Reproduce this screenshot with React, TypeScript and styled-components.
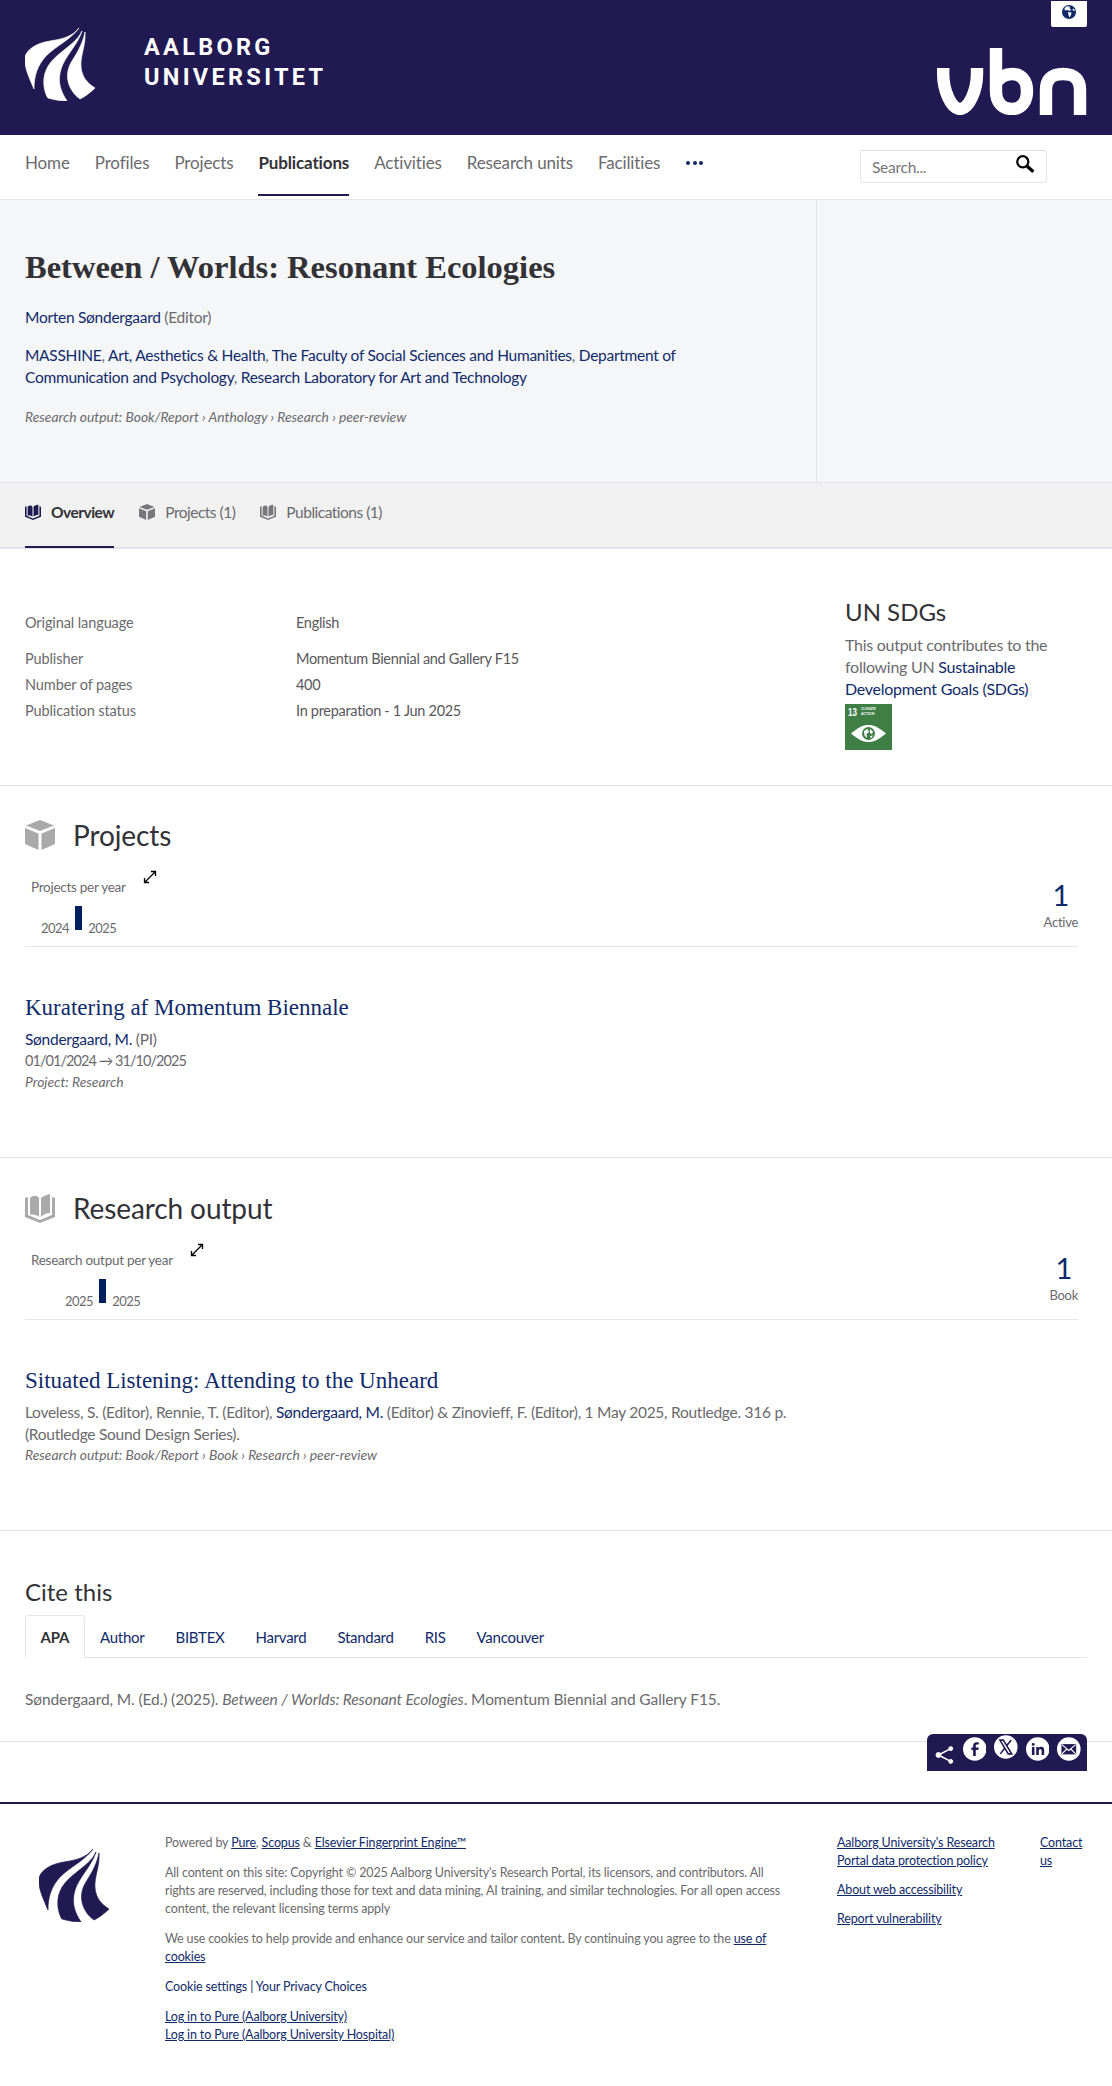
import styled, { createGlobalStyle } from "styled-components";

const NAVY = "#211a52";
const LINK = "#0f2a6b";
const TEXT = "#6a6a6d";
const DARK = "#323236";
const RULE = "#e3e5e8";
const SERIF = `"Liberation Serif", serif`;

const GlobalStyle = createGlobalStyle`
  html, body {
    margin: 0;
    padding: 0;
    background: #fff;
    color: ${TEXT};
    font-family: Lato, "Open Sans", sans-serif;
    font-size: 15px;
    letter-spacing: -0.27px;
  }
  * { box-sizing: border-box; }
  a { color: ${LINK}; text-decoration: none; }
`;

const Banner = styled.header`
  height: 135px;
  background: ${NAVY};
  display: flex;
  justify-content: space-between;
  padding: 0 25px;
`;

const Brand = styled.div`
  display: flex;
  align-items: flex-start;
  padding-top: 28px;
  gap: 49px;
`;

const BrandName = styled.div`
  margin-top: 3.5px;
  font-family: Roboto, sans-serif;
  font-weight: 700;
  font-size: 23.5px;
  line-height: 30px;
  letter-spacing: 3.3px;
  color: #fff;
`;

const BannerRight = styled.div`
  display: flex;
  flex-direction: column;
  align-items: flex-end;
`;

const GlobeButton = styled.div`
  width: 36px;
  height: 26px;
  margin-top: 1px;
  background: #fff;
  border-radius: 0 0 2px 2px;
  display: flex;
  align-items: center;
  justify-content: center;
  padding-bottom: 4px;
`;

const VbnLogo = styled.svg`
  width: 150px;
  height: 67px;
  margin-top: 21px;
`;

const NavBar = styled.nav`
  height: 65px;
  border-bottom: 1px solid ${RULE};
  display: flex;
  padding: 0 65px 0 25px;
  gap: 25px;
`;

const NavItem = styled.a<{ $active?: boolean }>`
  height: 61px;
  line-height: 56px;
  font-size: 17px;
  letter-spacing: -0.14px;
  color: ${(p) => (p.$active ? DARK : TEXT)};
  font-weight: ${(p) => (p.$active ? 700 : 400)};
  border-bottom: 2px solid ${(p) => (p.$active ? NAVY : "transparent")};
`;

const MoreDots = styled.span`
  display: flex;
  gap: 2.5px;
  align-items: center;
  height: 56px;
  margin-left: 1px;
  i {
    width: 4px;
    height: 4px;
    border-radius: 50%;
    background: ${LINK};
  }
`;

const SearchBox = styled.div`
  margin-left: auto;
  margin-top: 15px;
  width: 187px;
  height: 33px;
  border: 1px solid #e4e6e9;
  border-top-color: #dcdcdc;
  border-radius: 3px;
  display: flex;
  align-items: center;
  justify-content: space-between;
  padding: 0 11px 0 11px;
  font-size: 15.5px;
  color: #77777a;
  svg { margin-top: -6px; }
`;

const Hero = styled.section`
  height: 282px;
  background: #f5f6f8;
  display: flex;
`;

const HeroMain = styled.div`
  width: 817px;
  border-right: 1px solid ${RULE};
  padding: 47px 120px 0 25px;
`;

const Title = styled.h1`
  margin: 0 0 19px;
  font-family: ${SERIF};
  font-weight: 700;
  font-size: 32.5px;
  line-height: 40px;
  letter-spacing: 0;
  color: ${DARK};
`;

const Persons = styled.p`
  margin: 0 0 16px;
  font-size: 15.5px;
  line-height: 22px;
`;

const Meta = styled.p`
  margin: 0;
  font-size: 13.85px;
  line-height: 20px;
  letter-spacing: 0;
  font-style: italic;
`;

const HeroMeta = styled(Meta)`
  margin-top: 19px;
`;

const Tabs = styled.div`
  height: 67px;
  background: #f1f1f1;
  border-top: 1px solid ${RULE};
  border-bottom: 2px solid #e0e3e7;
  display: flex;
  gap: 25px;
  padding-left: 25px;
`;

const Tab = styled.a<{ $active?: boolean }>`
  display: flex;
  align-items: flex-start;
  gap: 10px;
  height: 65px;
  padding-top: 18px;
  line-height: 22px;
  font-size: 15.5px;
  letter-spacing: -0.5px;
  color: ${(p) => (p.$active ? DARK : TEXT)};
  font-weight: ${(p) => (p.$active ? 700 : 400)};
  border-bottom: 2px solid ${(p) => (p.$active ? NAVY : "transparent")};
  svg { margin-top: 3px; }
`;

const Overview = styled.section`
  height: 237px;
  border-bottom: 1px solid ${RULE};
  display: flex;
  padding: 48px 25px 0;
`;

const Details = styled.dl`
  width: 820px;
  margin: 13px 0 0;
  font-size: 14.5px;
  letter-spacing: -0.1px;
`;

const DetailRow = styled.div<{ $spaced?: boolean }>`
  display: flex;
  line-height: 26px;
  margin-bottom: ${(p) => (p.$spaced ? "10px" : "0")};
  dt { width: 271px; }
  dd { margin: 0; color: #58585b; letter-spacing: -0.3px; }
`;

const Aside = styled.aside`
  width: 210px;
`;

const AsideTitle = styled.h3`
  margin: 0 0 7px;
  font-weight: 400;
  font-size: 24px;
  line-height: 30px;
  letter-spacing: 0;
  color: ${DARK};
`;

const AsideText = styled.p`
  margin: 0;
  font-size: 16px;
  line-height: 22px;
`;

const SdgBadge = styled.div`
  width: 47px;
  height: 46px;
  margin-top: 4px;
  background: #3f7e44;
  color: #fff;
  padding: 3px 3px;
  letter-spacing: 0;
  display: flex;
  flex-direction: column;
  align-items: center;
`;

const SdgHead = styled.div`
  align-self: flex-start;
  display: flex;
  gap: 3px;
  b {
    font-family: "Liberation Sans", sans-serif;
    font-size: 10px;
    line-height: 11px;
    transform: scaleX(0.8);
    transform-origin: left;
    width: 9px;
  }
  span {
    font-size: 3.5px;
    line-height: 4.5px;
    font-weight: 700;
    margin-left: 1px;
  }
`;

const SdgEye = styled.svg`
  width: 35px;
  height: 17px;
  margin-top: 7px;
`;

const Section = styled.section<{ $top?: number }>`
  border-bottom: 1px solid ${RULE};
  padding: ${(p) => p.$top ?? 28}px 25px 65px;
`;

const SectionHead = styled.div`
  display: flex;
  align-items: center;
  gap: 18px;
  height: 42px;
  margin-bottom: 14px;
  h2 {
    margin: 0;
    font-weight: 400;
    font-size: 28px;
    letter-spacing: -0.1px;
    color: ${DARK};
  }
`;

const ChartRow = styled.div`
  display: flex;
  justify-content: space-between;
  height: 77px;
  margin-right: 9px;
  border-bottom: 1px solid ${RULE};
  margin-bottom: 46px;
`;

const ChartBox = styled.div`
  padding-left: 6px;
`;

const ChartLabel = styled.div`
  display: flex;
  gap: 17px;
  font-size: 13.5px;
  line-height: 20px;
  margin-top: 7px;
  svg { margin-top: -7px; }
`;

const Plot = styled.div<{ $offset: number }>`
  display: flex;
  align-items: flex-end;
  gap: 6px;
  padding-left: ${(p) => p.$offset}px;
  margin-top: 9px;
  height: 24px;
  font-size: 13px;
  letter-spacing: -0.5px;
  line-height: 16px;
  span { margin-bottom: -6px; }
`;

const Bar = styled.i`
  width: 7px;
  height: 24px;
  background: #001f5f;
`;

const Tally = styled.div`
  text-align: right;
  font-size: 13px;
  line-height: 20px;
  a {
    display: block;
    font-size: 29px;
    line-height: 34px;
    margin-top: 8px;
    text-align: center;
  }
`;

const ItemTitle = styled.h3`
  margin: 0 0 5px;
  font-family: ${SERIF};
  font-weight: 400;
  font-size: 23px;
  line-height: 30px;
  letter-spacing: 0;
  color: ${LINK};
`;

const ItemLine = styled.p`
  margin: 0;
  font-size: 15.5px;
  line-height: 22px;
  max-width: 810px;
`;

const DateLine = styled(ItemLine)`
  font-size: 14.5px;
  letter-spacing: -0.95px;
`;

const Cite = styled.section`
  position: relative;
  border-bottom: 1px solid ${RULE};
  padding: 46px 25px 31px;
  h3 {
    margin: 0 0 8px;
    font-weight: 400;
    font-size: 24px;
    line-height: 30px;
    letter-spacing: 0;
    color: ${DARK};
  }
`;

const CiteTabs = styled.div`
  display: flex;
  height: 43px;
  width: 1062px;
  border-bottom: 1px solid ${RULE};
  margin-bottom: 30px;
`;

const CiteTab = styled.a<{ $active?: boolean }>`
  height: 43px;
  padding: 0 14.5px;
  line-height: 42px;
  font-size: 15px;
  color: ${(p) => (p.$active ? DARK : LINK)};
  font-weight: ${(p) => (p.$active ? 700 : 400)};
  background: ${(p) => (p.$active ? "#fff" : "transparent")};
  border: 1px solid ${(p) => (p.$active ? RULE : "transparent")};
  border-bottom-color: ${(p) => (p.$active ? "#fff" : "transparent")};
  border-radius: 3px 3px 0 0;
`;

const CiteText = styled.p`
  margin: 0;
  font-size: 15.5px;
  line-height: 22px;
  letter-spacing: -0.1px;
`;

const ShareBar = styled.div`
  position: absolute;
  right: 25px;
  bottom: -30px;
  width: 160px;
  height: 37px;
  background: ${NAVY};
  border-radius: 6px 6px 0 0;
  display: flex;
  align-items: flex-start;
  gap: 8px;
  padding: 3px 6px 0 8px;
`;

const ShareIcon = styled.svg`
  margin-top: 8px;
  margin-right: 0;
`;

const ShareCircle = styled.svg<{ $up?: boolean }>`
  margin-top: ${(p) => (p.$up ? "-2px" : "0")};
`;

const Footer = styled.footer`
  margin-top: 60px;
  border-top: 2px solid ${NAVY};
  height: 284px;
  padding-top: 30px;
  display: flex;
  font-size: 12.5px;
  line-height: 18px;
  letter-spacing: -0.15px;
  a.u { text-decoration: underline; }
`;

const FooterLogo = styled.div`
  width: 165px;
  padding: 15px 0 0 39px;
`;

const FooterText = styled.div`
  width: 626px;
  p { margin: 0 0 12px; }
`;

const FooterLinks = styled.div`
  width: 165px;
  margin: 0 38px 0 46px;
  p { margin: 0 0 11px; }
`;

const FooterContact = styled.div`
  width: 50px;
`;

function Wings({ fill }: { fill: string }) {
  return (
    <svg width="70" height="73" viewBox="0 0 70 73" fill={fill} stroke={fill} strokeWidth="0.7">
      <path d="M54 0C47 9 37 11 25 13C12 15 2 21 0 29C-1 38 3 47 9 61C9 48 12 38 21 28C32 17 44 13 54 0Z" />
      <path d="M57 3C53 12 45 17 33 27C21 37 18 47 19 58C20 65 22 69 23 70C30 72 36 73 42 73C36 64 32 54 36 41C40 28 52 18 57 3Z" />
      <path d="M60 4C58 14 54 22 47 33C42 41 41 50 45 59C48 65 51 68 55 71C59 69 65 65 70 60C62 55 57 49 56 39C55 28 61 17 60 4Z" />
    </svg>
  );
}

function Globe() {
  return (
    <svg width="14" height="14" viewBox="0 0 14 14">
      <circle cx="7" cy="7" r="7" fill="#0f2a6b" />
      <path d="M4 1.5L8 1.5L7.5 3.5L9 4L8 6L5.5 5L3 5.5L2.5 3.5Z" fill="#fff" />
      <path d="M6 7L9.5 7.5L9 10L7.5 12.5L6.5 10Z" fill="#fff" />
      <path d="M11 3.5L13 5L12 6L10.5 5Z" fill="#fff" />
    </svg>
  );
}

function Cube({ size, fill }: { size: number; fill: string }) {
  return (
    <svg width={size} height={size} viewBox="0 0 30 30" fill={fill}>
      <path d="M15 0L29 5.5L15 11L1 5.5Z" />
      <path d="M0 8L13.5 13.5V30L0 24Z" />
      <path d="M30 8L16.5 13.5V30L30 24Z" />
    </svg>
  );
}

function Book({ size, fill }: { size: number; fill: string }) {
  return (
    <svg width={size} height={size} viewBox="0 0 30 30" fill={fill}>
      <path d="M0 5V24L15 30L30 24V5L27 4V22L15 27L3 22V4Z" />
      <path d="M5 5C8 2 12 2 14 5V24C12 22 8 21 5 22Z" />
      <path d="M25 1C21 2 18 3 16 5V24C18 22 21 20 25 20Z" />
    </svg>
  );
}

function Expand() {
  return (
    <svg width="14" height="14" viewBox="0 0 14 14" fill="none" stroke="#000" strokeWidth="1.3">
      <path d="M2 12L12 2M8 1.5H12.5V6M1.5 8V12.5H6" />
    </svg>
  );
}

function Chart({ label, from, to, offset }: { label: string; from: string; to: string; offset: number }) {
  return (
    <ChartBox>
      <ChartLabel>
        {label} <Expand />
      </ChartLabel>
      <Plot $offset={offset}>
        <span>{from}</span>
        <Bar />
        <span>{to}</span>
      </Plot>
    </ChartBox>
  );
}

export default function App() {
  return (
    <>
      <GlobalStyle />
      <Banner>
        <Brand>
          <Wings fill="#fff" />
          <BrandName>
            AALBORG
            <br />
            UNIVERSITET
          </BrandName>
        </Brand>
        <BannerRight>
          <GlobeButton>
            <Globe />
          </GlobeButton>
          <VbnLogo viewBox="0 0 150 67" fill="none" stroke="#fff" strokeWidth="12.4">
            <path d="M6.2 20V26C6.2 42 14 61 23 61C32 61 40 42 40 26V20" />
            <path d="M59 0V43C59 54 65 61 75 61C85 61 90 53 90 43C90 33 85 26 75 26C69 26 63 29 59 35" />
            <path d="M109 67V42C109 32 114 26 126 26C138 26 143 32 143 42V67" />
          </VbnLogo>
        </BannerRight>
      </Banner>

      <NavBar>
        <NavItem>Home</NavItem>
        <NavItem>Profiles</NavItem>
        <NavItem>Projects</NavItem>
        <NavItem $active>Publications</NavItem>
        <NavItem>Activities</NavItem>
        <NavItem>Research units</NavItem>
        <NavItem>Facilities</NavItem>
        <MoreDots>
          <i />
          <i />
          <i />
        </MoreDots>
        <SearchBox>
          Search...
          <svg width="20" height="20" viewBox="0 0 18 18" fill="none" stroke="#000">
            <circle cx="7" cy="7" r="5" strokeWidth="2" />
            <path d="M11 11L16.5 16" strokeWidth="3" />
          </svg>
        </SearchBox>
      </NavBar>

      <Hero>
        <HeroMain>
          <Title>Between / Worlds: Resonant Ecologies</Title>
          <Persons>
            <a>Morten Søndergaard</a> (Editor)
          </Persons>
          <Persons>
            <a>MASSHINE</a>, <a>Art, Aesthetics &amp; Health</a>, <a>The Faculty of Social Sciences and Humanities</a>,{" "}
            <a>Department of Communication and Psychology</a>, <a>Research Laboratory for Art and Technology</a>
          </Persons>
          <HeroMeta>Research output: Book/Report › Anthology › Research › peer-review</HeroMeta>
        </HeroMain>
      </Hero>

      <Tabs>
        <Tab $active>
          <Book size={16} fill={NAVY} />
          Overview
        </Tab>
        <Tab>
          <Cube size={16} fill="#77777a" />
          Projects (1)
        </Tab>
        <Tab>
          <Book size={16} fill="#77777a" />
          Publications (1)
        </Tab>
      </Tabs>

      <Overview>
        <Details>
          <DetailRow $spaced>
            <dt>Original language</dt>
            <dd>English</dd>
          </DetailRow>
          <DetailRow>
            <dt>Publisher</dt>
            <dd>Momentum Biennial and Gallery F15</dd>
          </DetailRow>
          <DetailRow>
            <dt>Number of pages</dt>
            <dd>400</dd>
          </DetailRow>
          <DetailRow>
            <dt>Publication status</dt>
            <dd>In preparation - 1 Jun 2025</dd>
          </DetailRow>
        </Details>
        <Aside>
          <AsideTitle>UN SDGs</AsideTitle>
          <AsideText>
            This output contributes to the following UN <a>Sustainable Development Goals (SDGs)</a>
          </AsideText>
          <SdgBadge>
            <SdgHead>
              <b>13</b>
              <span>
                CLIMATE
                <br />
                ACTION
              </span>
            </SdgHead>
            <SdgEye viewBox="0 0 35 17">
              <path d="M0 8.5C7 2.5 12 0 17.5 0C23 0 28 2.5 35 8.5C28 14.5 23 17 17.5 17C12 17 7 14.5 0 8.5Z" fill="#fff" />
              <circle cx="17.5" cy="8.5" r="6.5" fill="#3f7e44" />
              <path d="M13 6L16.5 4L18 7L15.5 9L16 13L13.5 10.5ZM19 4L22 6.5L21 9L18.8 8ZM19 11L22 10.5L20 13.5Z" fill="#fff" />
            </SdgEye>
          </SdgBadge>
        </Aside>
      </Overview>

      <Section>
        <SectionHead>
          <Cube size={30} fill="#aaaaaa" />
          <h2>Projects</h2>
        </SectionHead>
        <ChartRow>
          <Chart label="Projects per year" from="2024" to="2025" offset={10} />
          <Tally>
            <a>1</a>
            Active
          </Tally>
        </ChartRow>
        <ItemTitle>
          <a>Kuratering af Momentum Biennale</a>
        </ItemTitle>
        <ItemLine>
          <a>Søndergaard, M.</a> (PI)
        </ItemLine>
        <DateLine>01/01/2024 → 31/10/2025</DateLine>
        <Meta>Project: Research</Meta>
      </Section>

      <Section $top={29}>
        <SectionHead>
          <Book size={30} fill="#aaaaaa" />
          <h2>Research output</h2>
        </SectionHead>
        <ChartRow>
          <Chart label="Research output per year" from="2025" to="2025" offset={34} />
          <Tally>
            <a>1</a>
            Book
          </Tally>
        </ChartRow>
        <ItemTitle>
          <a>Situated Listening: Attending to the Unheard</a>
        </ItemTitle>
        <ItemLine>
          Loveless, S. (Editor), Rennie, T. (Editor), <a>Søndergaard, M.</a> (Editor) &amp; Zinovieff, F. (Editor), 1 May
          2025, Routledge. 316 p. (Routledge Sound Design Series).
        </ItemLine>
        <Meta>Research output: Book/Report › Book › Research › peer-review</Meta>
      </Section>

      <Cite>
        <h3>Cite this</h3>
        <CiteTabs>
          <CiteTab $active>APA</CiteTab>
          <CiteTab>Author</CiteTab>
          <CiteTab>BIBTEX</CiteTab>
          <CiteTab>Harvard</CiteTab>
          <CiteTab>Standard</CiteTab>
          <CiteTab>RIS</CiteTab>
          <CiteTab>Vancouver</CiteTab>
        </CiteTabs>
        <CiteText>
          Søndergaard, M. (Ed.) (2025). <em>Between / Worlds: Resonant Ecologies</em>. Momentum Biennial and Gallery F15.
        </CiteText>
        <ShareBar>
          <ShareIcon width="20" height="20" viewBox="0 0 20 20" fill="#fff" stroke="#fff">
            <circle cx="3.5" cy="10" r="2.5" />
            <circle cx="16" cy="3.5" r="2" />
            <circle cx="16" cy="16.5" r="2" />
            <path d="M3.5 10L16 3.5M3.5 10L16 16.5" strokeWidth="1.6" />
          </ShareIcon>
          <ShareCircle width="24" height="24" viewBox="0 0 24 24">
            <circle cx="12" cy="12" r="12" fill="#fff" />
            <path d="M13 19V13H15.5L16 10.5H13V9C13 8 13.5 7.5 14.5 7.5H16V5.2H14C11.5 5.2 10.3 6.6 10.3 8.8V10.5H8.5V13H10.3V19Z" fill={NAVY} />
          </ShareCircle>
          <ShareCircle $up width="24" height="24" viewBox="0 0 24 24">
            <circle cx="12" cy="12" r="12" fill="#fff" />
            <path d="M6 5H9.5L18 19H14.5Z" fill="none" stroke={NAVY} strokeWidth="1.6" />
            <path d="M17.5 5L12.8 10.8M11 13L6.5 19" stroke={NAVY} strokeWidth="1.6" />
          </ShareCircle>
          <ShareCircle width="24" height="24" viewBox="0 0 24 24">
            <circle cx="12" cy="12" r="12" fill="#fff" />
            <path d="M6 10H8.6V18H6ZM7.3 5.8A1.5 1.5 0 1 1 7.3 8.8A1.5 1.5 0 0 1 7.3 5.8ZM10.4 10H13V11.2C13.6 10.3 14.5 9.8 15.6 9.8C17.7 9.8 18.5 11.2 18.5 13.4V18H15.9V14C15.9 12.9 15.5 12.2 14.6 12.2C13.6 12.2 13 12.9 13 14V18H10.4Z" fill={NAVY} />
          </ShareCircle>
          <ShareCircle width="24" height="24" viewBox="0 0 24 24">
            <circle cx="12" cy="12" r="12" fill="#fff" />
            <path d="M4.5 7H19.5V17.5H4.5Z" fill={NAVY} />
            <path d="M5 7.5L12 13.5L19 7.5M5 17L10 12M19 17L14 12" fill="none" stroke="#fff" strokeWidth="1.1" />
          </ShareCircle>
        </ShareBar>
      </Cite>

      <Footer>
        <FooterLogo>
          <Wings fill={NAVY} />
        </FooterLogo>
        <FooterText>
          <p>
            Powered by <a className="u">Pure</a>, <a className="u">Scopus</a> &amp;{" "}
            <a className="u">Elsevier Fingerprint Engine™</a>
          </p>
          <p>
            All content on this site: Copyright © 2025 Aalborg University's Research Portal, its licensors, and
            contributors. All rights are reserved, including those for text and data mining, AI training, and similar
            technologies. For all open access content, the relevant licensing terms apply
          </p>
          <p>
            We use cookies to help provide and enhance our service and tailor content. By continuing you agree to the{" "}
            <a className="u">use of cookies</a>
          </p>
          <p>
            <a>Cookie settings</a> <a>|</a> <a>Your Privacy Choices</a>
          </p>
          <p>
            <a className="u">Log in to Pure (Aalborg University)</a>
            <br />
            <a className="u">Log in to Pure (Aalborg University Hospital)</a>
          </p>
        </FooterText>
        <FooterLinks>
          <p>
            <a className="u">Aalborg University's Research Portal data protection policy</a>
          </p>
          <p>
            <a className="u">About web accessibility</a>
          </p>
          <p>
            <a className="u">Report vulnerability</a>
          </p>
        </FooterLinks>
        <FooterContact>
          <a className="u">Contact us</a>
        </FooterContact>
      </Footer>
    </>
  );
}
